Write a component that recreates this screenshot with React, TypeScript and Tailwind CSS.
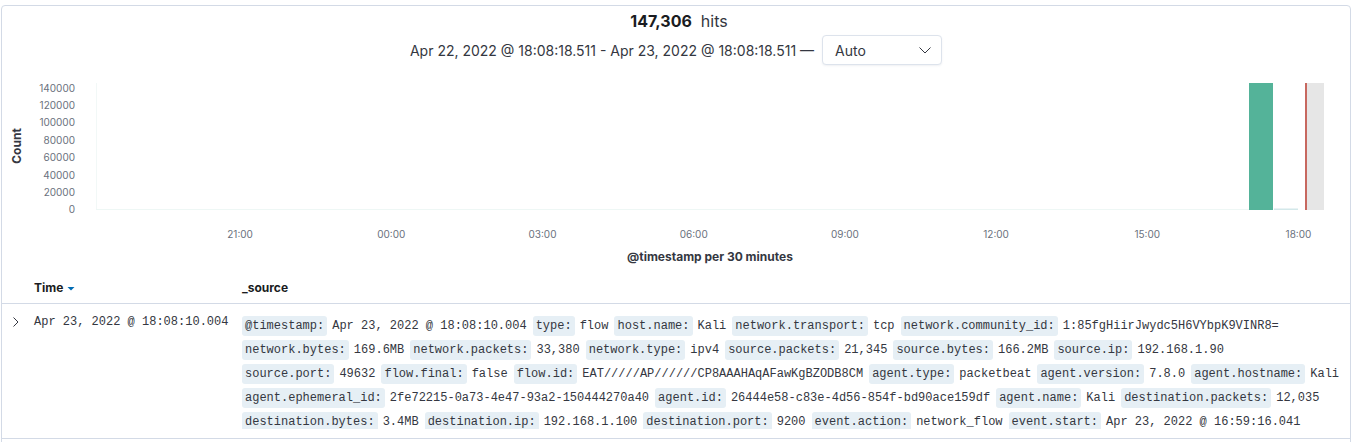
import React from "react";

type Pair = [string, string];

const lines: Pair[][] = [
  [
    ["@timestamp:", "Apr 23, 2022 @ 18:08:10.004"],
    ["type:", "flow"],
    ["host.name:", "Kali"],
    ["network.transport:", "tcp"],
    ["network.community_id:", "1:85fgHiirJwydc5H6VYbpK9VINR8="],
  ],
  [
    ["network.bytes:", "169.6MB"],
    ["network.packets:", "33,380"],
    ["network.type:", "ipv4"],
    ["source.packets:", "21,345"],
    ["source.bytes:", "166.2MB"],
    ["source.ip:", "192.168.1.90"],
  ],
  [
    ["source.port:", "49632"],
    ["flow.final:", "false"],
    ["flow.id:", "EAT/////AP//////CP8AAAHAqAFawKgBZODB8CM"],
    ["agent.type:", "packetbeat"],
    ["agent.version:", "7.8.0"],
    ["agent.hostname:", "Kali"],
  ],
  [
    ["agent.ephemeral_id:", "2fe72215-0a73-4e47-93a2-150444270a40"],
    ["agent.id:", "26444e58-c83e-4d56-854f-bd90ace159df"],
    ["agent.name:", "Kali"],
    ["destination.packets:", "12,035"],
  ],
  [
    ["destination.bytes:", "3.4MB"],
    ["destination.ip:", "192.168.1.100"],
    ["destination.port:", "9200"],
    ["event.action:", "network_flow"],
    ["event.start:", "Apr 23, 2022 @ 16:59:16.041"],
  ],
];

const yTicks = [0, 20000, 40000, 60000, 80000, 100000, 120000, 140000];
const xTicks = ["21:00", "00:00", "03:00", "06:00", "09:00", "12:00", "15:00", "18:00"];

function Chart() {
  return (
    <div className="h-[205px] w-full">
      <svg
        width={1348}
        height={205}
        viewBox="2 65 1348 205"
        className="block font-['Inter',sans-serif]"
      >
        <text
          x={16}
          y={146}
          transform="rotate(-90 16 146)"
          textAnchor="middle"
          dominantBaseline="central"
          fontSize={12}
          fontWeight={700}
          fill="#343741"
        >
          Count
        </text>
        {yTicks.map((v, i) => (
          <text
            key={v}
            x={75}
            y={209.3 - i * 17.37}
            textAnchor="end"
            dominantBaseline="central"
            fontSize={10}
            fill="#6a717d"
          >
            {v}
          </text>
        ))}
        <rect x={96} y={83} width={1} height={127} fill="#f2f8f7" />
        <rect x={96} y={209} width={1153} height={1} fill="#eef7f5" />
        <rect x={1249} y={83} width={24} height={127} fill="#54b399" />
        <rect x={1274} y={208.5} width={24} height={1.5} fill="#d3e8ea" />
        <rect x={1307} y={83} width={17} height={127} fill="#e6e6e6" />
        <rect x={1305} y={83} width={2} height={127} fill="#c7685f" />
        {xTicks.map((t, i) => (
          <text
            key={t}
            x={88.9 + (i + 1) * 151.2}
            y={234.3}
            textAnchor="middle"
            dominantBaseline="central"
            fontSize={10}
            fill="#6a717d"
          >
            {t}
          </text>
        ))}
        <text
          x={710}
          y={256}
          textAnchor="middle"
          dominantBaseline="central"
          fontSize={12}
          fontWeight={700}
          fill="#343741"
        >
          @timestamp per 30 minutes
        </text>
      </svg>
    </div>
  );
}

export default function App() {
  return (
    <div className="h-[442px] w-[1351px] overflow-hidden bg-white pl-px pt-[5px] font-['Inter',sans-serif] text-[#343741]">
      <div className="h-[460px] w-[1350px] rounded-[4px] border border-[#d3dae6] bg-white">
        <div className="flex items-baseline justify-center gap-[9px] pl-[6px] pt-[3px] leading-6">
          <span className="text-[16px] font-bold text-[#1a1c21]">147,306</span>
          <span className="text-[16px] text-[#343741]">hits</span>
        </div>
        <div className="mt-[2px] flex h-[30px] items-center justify-center gap-[8px] text-[14px]">
          <span>Apr 22, 2022 @ 18:08:18.511 - Apr 23, 2022 @ 18:08:18.511 —</span>
          <div className="flex h-[30px] w-[120px] items-center justify-between rounded-[4px] border border-[#dde3ec] bg-white pl-[12px] pr-[8px] shadow-[0_1px_2px_rgba(152,162,179,0.15)]">
            <span>Auto</span>
            <svg width={16} height={16} viewBox="0 0 16 16">
              <path d="M2.5 5.5 L8 11 L13.5 5.5" fill="none" stroke="#343741" strokeWidth={1} />
            </svg>
          </div>
        </div>
        <Chart />
        <div className="flex h-[34px] items-center border-b border-[#d3dae6] pt-[2px] text-[12px] font-bold text-[#1a1c21]">
          <div className="w-[32px]" />
          <div className="flex w-[208px] items-center gap-[4px]">
            <span>Time</span>
            <svg width={8} height={6} viewBox="0 0 8 6" className="mt-[3px]">
              <path d="M0.5 1 L7.5 1 L4 4.5 Z" fill="#006bb4" />
            </svg>
          </div>
          <div>_source</div>
        </div>
        <div className="flex border-b border-[#d3dae6]">
          <div className="w-[32px] pt-[10px]">
            <svg width={16} height={16} viewBox="0 0 16 16" className="ml-[4px]">
              <path d="M7.5 3.5 L12 8 L7.5 12.5" fill="none" stroke="#343741" strokeWidth={1} />
            </svg>
          </div>
          <div className="w-[208px] pt-[8px] font-['Liberation_Mono',monospace] text-[12px] leading-[20px] text-[#343741]">
            Apr 23, 2022 @ 18:08:10.004
          </div>
          <div className="flex-1 pb-[9px] pt-[10px]">
            <div className="max-h-[115px] overflow-hidden font-['Liberation_Mono',monospace] text-[12px] text-[#343741]">
              {lines.map((line, li) => (
                <div key={li} className="flex h-[24px] items-center whitespace-nowrap">
                  {line.map(([k, v]) => (
                    <React.Fragment key={k}>
                      <span className="flex h-[20px] items-center rounded-[3px] bg-[#e6eff5] px-[3px]">
                        {k}
                      </span>
                      <span className="ml-[5px] mr-[6px]">{v}</span>
                    </React.Fragment>
                  ))}
                </div>
              ))}
            </div>
          </div>
        </div>
      </div>
    </div>
  );
}
